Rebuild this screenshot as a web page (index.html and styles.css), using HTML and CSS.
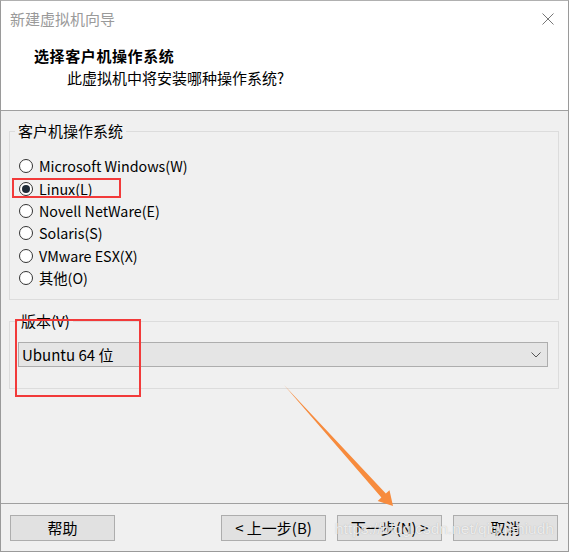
FILE: index.html
```html
<!DOCTYPE html>
<html lang="zh-CN">
<head>
<meta charset="utf-8">
<title>新建虚拟机向导</title>
<link rel="stylesheet" href="styles.css">
</head>
<body>
<div class="window">
  <div class="titlebar">
    <span class="title">新建虚拟机向导</span>
    <svg class="close" width="12" height="12" viewBox="0 0 12 12"><path d="M0.5 0.5 L11.5 11.5 M11.5 0.5 L0.5 11.5" stroke="#777" stroke-width="1" fill="none"/></svg>
  </div>
  <div class="header">
    <div class="heading">选择客户机操作系统</div>
    <div class="subheading">此虚拟机中将安装哪种操作系统?</div>
  </div>
  <div class="panel">
    <fieldset class="group os-group">
      <legend>客户机操作系统</legend>
      <div class="radio"><span class="circle"></span><span class="label">Microsoft Windows(W)</span></div>
      <div class="radio checked"><span class="circle"></span><span class="label">Linux(L)</span><span class="mark mark-linux"></span></div>
      <div class="radio"><span class="circle"></span><span class="label">Novell NetWare(E)</span></div>
      <div class="radio"><span class="circle"></span><span class="label">Solaris(S)</span></div>
      <div class="radio"><span class="circle"></span><span class="label">VMware ESX(X)</span></div>
      <div class="radio"><span class="circle"></span><span class="label">其他(O)</span></div>
    </fieldset>
    <fieldset class="group version-group">
      <legend>版本(V)</legend>
      <div class="select">
        <span class="select-text">Ubuntu 64 位</span>
        <svg class="chevron" width="10" height="6" viewBox="0 0 10 6"><path d="M0.5 0.5 L5 5 L9.5 0.5" stroke="#555" stroke-width="1" fill="none"/></svg>
      </div>
      <span class="mark mark-version"></span>
    </fieldset>
  </div>
  <div class="footer">
    <button class="btn">帮助</button>
    <div class="spacer"></div>
    <button class="btn">&lt; 上一步(B)</button>
    <button class="btn">下一步(N) &gt;</button>
    <button class="btn">取消</button>
  </div>
  <svg class="arrow" width="570" height="552" viewBox="0 0 570 552"><polygon points="284,385 385.8,493.6 389.5,490.2 393,506 377.7,501 381.4,497.6" fill="#f78b3d"/></svg>
  <div class="watermark">https://blog.csdn.net/qiquahiudh</div>
</div>
</body>
</html>
```
FILE: styles.css
```css
* { box-sizing: border-box; }
html, body { margin: 0; padding: 0; background: #fff; }
body {
  width: 570px;
  height: 552px;
  overflow: hidden;
  font-family: "Noto Sans CJK SC", "Noto Sans", sans-serif;
  font-size: 15px;
  color: #000;
}
.window {
  position: relative;
  width: 569px;
  height: 552px;
  border-left: 1px solid #9a9a9a;
  border-right: 1px solid #9a9a9a;
  border-top: 1px solid #b0b0b0;
  border-bottom: 1px solid #9a9a9a;
  display: flex;
  flex-direction: column;
  background: #f0f0f0;
}
.titlebar {
  height: 36px;
  background: #fff;
  display: flex;
  align-items: center;
  justify-content: space-between;
  padding: 0 14px 0 9px;
}
.title { color: #9a9a9a; font-size: 15px; line-height: 36px; }
.close { display: block; }
.header {
  height: 74px;
  background: #fff;
  border-bottom: 1px solid #a0a0a0;
  padding: 8px 0 0 33px;
}
.heading { font-weight: bold; line-height: 22px; letter-spacing: 0.6px; }
.subheading { line-height: 22px; padding-left: 33px; }
.panel {
  flex: 1;
  padding: 10px 9px 0 8px;
  display: flex;
  flex-direction: column;
  gap: 11px;
}
.group {
  position: relative;
  margin: 0;
  border: 1px solid #dcdcdc;
  min-width: 0;
}
.group legend {
  padding: 0 3px;
  line-height: 20px;
}
.os-group { padding: 14px 5px 10px 5px; }
.radio {
  position: relative;
  height: 22.4px;
  display: flex;
  align-items: center;
  padding-left: 4px;
}
.circle {
  width: 14px;
  height: 14px;
  border: 1px solid #333;
  border-radius: 50%;
  background: #fff;
  display: flex;
  align-items: center;
  justify-content: center;
  margin-right: 6px;
}
.checked .circle::after {
  content: "";
  width: 8px;
  height: 8px;
  border-radius: 50%;
  background: #1f2b38;
}
.label { font-size: 14.3px; line-height: 20px; white-space: nowrap; }
.mark {
  position: absolute;
  border: 2px solid #f23a3a;
  pointer-events: none;
}
.mark-linux { left: -3px; top: 1px; width: 109px; height: 20px; }
.version-group { padding: 11px 10px 21px 8px; }
.select {
  height: 25px;
  background: #e5e5e5;
  border: 1px solid #adadad;
  display: flex;
  align-items: center;
  justify-content: space-between;
  padding: 0 6px 0 3px;
}
.select-text { line-height: 20px; }
.chevron { display: block; }
.mark-version { left: 5px; top: -12px; width: 126px; height: 78px; }
.footer {
  height: 48px;
  border-top: 1px solid #a0a0a0;
  display: flex;
  align-items: flex-start;
  gap: 11px;
  padding: 11px 10px 0 9px;
}
.spacer { flex: 1; }
.btn {
  width: 105px;
  height: 26px;
  background: #e1e1e1;
  border: 1px solid #adadad;
  font-family: inherit;
  font-size: 15px;
  color: #000;
  padding: 0;
  line-height: 22px;
}
.arrow {
  position: absolute;
  left: -1px;
  top: -1px;
  pointer-events: none;
}
.watermark {
  position: absolute;
  left: 334px;
  top: 519px;
  font-family: "Liberation Sans", Arial, sans-serif;
  font-size: 15.5px;
  color: rgba(255, 255, 255, 0.75);
  text-shadow: 0 0 1px rgba(120, 120, 120, 0.5);
  white-space: nowrap;
  pointer-events: none;
}
```
